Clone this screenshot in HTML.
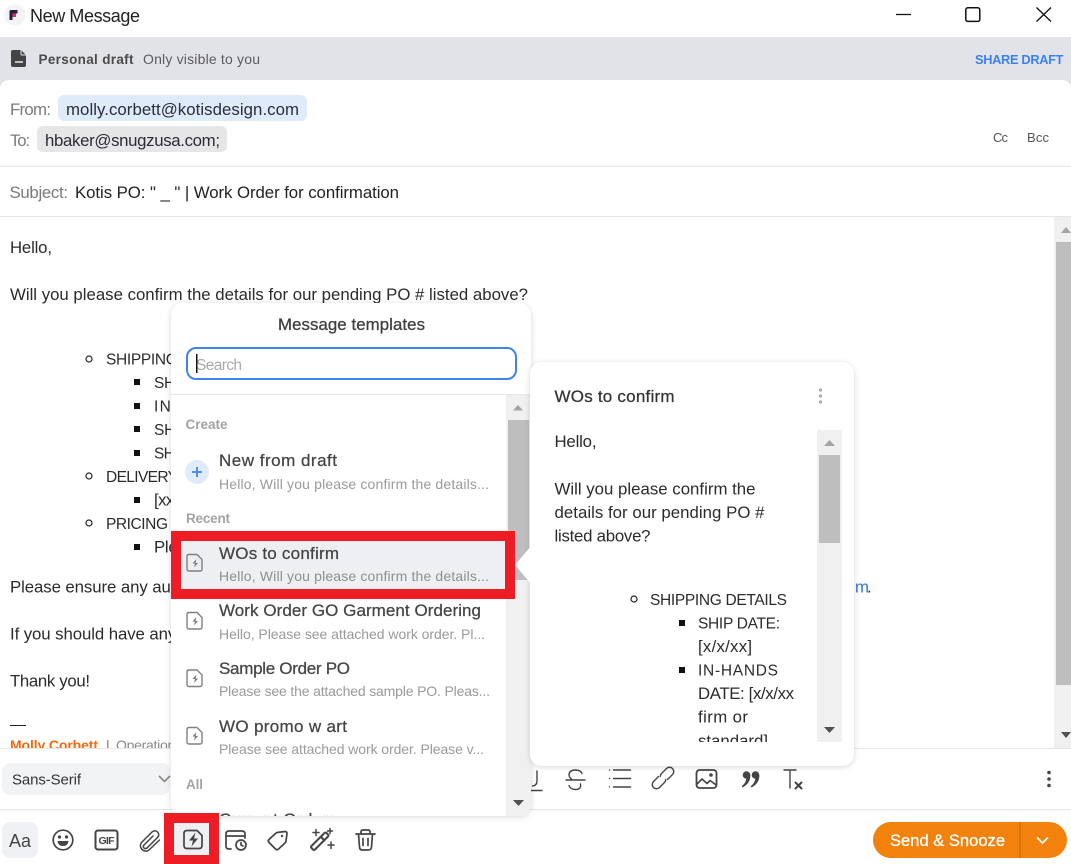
<!DOCTYPE html>
<html><head><meta charset="utf-8"><title>New Message</title>
<style>
html,body{margin:0;padding:0;background:#fff;width:1071px;height:864px;overflow:hidden}
svg{display:block}
text{font-family:"Liberation Sans",Arial,sans-serif;font-size:16.8px;fill:#2b2b2b;white-space:pre}
.u{font-size:15.5px}
.m{stroke:#3f3f3f;stroke-width:.3px}
.h{font-size:13.5px;fill:#a3a3a3;font-weight:bold}
.t{font-size:17px;fill:#444;stroke:#444;stroke-width:.25px}
.s{font-size:14px;fill:#9a9a9a}
.i{fill:none;stroke:#444;stroke-width:1.7;stroke-linecap:round;stroke-linejoin:round}
.ti{fill:none;stroke:#808080;stroke-width:1.4;stroke-linejoin:round}
</style></head><body>
<svg width="1071" height="864" viewBox="0 0 1071 864" xmlns="http://www.w3.org/2000/svg">
<defs>
<filter id="sh" x="-10%" y="-10%" width="120%" height="120%"><feDropShadow dx="0" dy="1" stdDeviation="3" flood-color="#000" flood-opacity=".16"/></filter>
<clipPath id="sigc"><rect x="0" y="217" width="1054" height="531"/></clipPath>
<clipPath id="popc"><rect x="171" y="303" width="360" height="513" rx="12"/></clipPath>
<clipPath id="prevc"><rect x="530" y="430" width="287" height="312"/></clipPath>
</defs>

<!-- title bar -->
<rect width="1071" height="37" fill="#fff"/>
<circle cx="15" cy="15" r="10.5" fill="#f3f3f6"/>
<path d="M9.500 20V11.500q0-1.500 1.500-1.500H17.500v3.500H12.500V20z" fill="#1f2440"/>
<rect x="12.500" y="13.500" width="3.500" height="3.500" fill="#ee2a5c"/>
<text x="30" y="22" textLength="110" style="font-size:18px;fill:#222">New Message</text>
<path d="M896 14.500h15" stroke="#111" stroke-width="1.300"/>
<rect x="965.800" y="7.800" width="14" height="13.600" rx="2" fill="none" stroke="#111" stroke-width="1.500"/>
<path d="M1036.500 7.500l14.500 14M1051 7.500l-14.500 14" stroke="#111" stroke-width="1.300" fill="none"/>

<!-- draft band -->
<rect y="37" width="1071" height="50" fill="#e2e3e8"/>
<path d="M13 50h8l5 5v10q0 2-2 2H13q-2 0-2-2V52q0-2 2-2z" fill="#444"/>
<path d="M21 50v4q0 1 1 1h4" fill="none" stroke="#e2e3e8" stroke-width="1"/>
<path d="M15 62h8" stroke="#e2e3e8" stroke-width="1.600"/>
<text x="38.500" y="64" textLength="95" style="font-size:13.500px;font-weight:bold;fill:#4a4a4a">Personal draft</text>
<text x="143" y="64" textLength="117" style="font-size:14px;fill:#5c5c5c">Only visible to you</text>
<text x="975" y="64" textLength="88.500" style="font-size:12.800px;font-weight:bold;fill:#3b82f0">SHARE DRAFT</text>
<path d="M0 864V90q0-10 10-10H1061q10 0 10 10V864z" fill="#fff"/>

<!-- header -->
<text x="10" y="115" textLength="41" style="fill:#7a7a7a">From:</text>
<rect x="58" y="95" width="249" height="26" rx="6" fill="#deebfb"/>
<text x="66" y="115" textLength="233" style="fill:#2c2c3a">molly.corbett@kotisdesign.com</text>
<text x="10" y="146" textLength="20" style="fill:#7a7a7a">To:</text>
<rect x="37" y="126" width="190" height="26" rx="6" fill="#e6e6e6"/>
<text x="45" y="146" textLength="175" style="fill:#2c2c3a">hbaker@snugzusa.com;</text>
<text x="993" y="142" textLength="15" style="font-size:13px;fill:#555">Cc</text>
<text x="1027" y="142" textLength="22" style="font-size:13px;fill:#555">Bcc</text>
<rect y="166" width="1071" height="1" fill="#e6e6e6"/>
<text x="9.500" y="198" textLength="58.500" style="fill:#7a7a7a">Subject:</text>
<text x="75" y="198" textLength="324" style="fill:#222">Kotis PO: " _ " | Work Order for confirmation</text>
<rect y="216" width="1071" height="1" fill="#e6e6e6"/>

<!-- body -->
<g clip-path="url(#sigc)">
<text x="10" y="253" textLength="42">Hello,</text>
<text x="10" y="300" textLength="518">Will you please confirm the details for our pending PO # listed above?</text>
<circle cx="89" cy="359" r="3" fill="none" stroke="#222" stroke-width="1.200"/>
<text x="106" y="364.500" textLength="137" class="u">SHIPPING DETAILS</text>
<rect x="134" y="379" width="6" height="6" fill="#111"/><text x="154" y="388" textLength="82" class="u">SHIP DATE:</text>
<rect x="134" y="403" width="6" height="6" fill="#111"/><text x="154" y="411.500" textLength="84" class="u">IN-HANDS</text>
<rect x="134" y="426" width="6" height="6" fill="#111"/><text x="154" y="435" textLength="60" class="u">SHIP TO</text>
<rect x="134" y="450" width="6" height="6" fill="#111"/><text x="154" y="458.500" textLength="60" class="u">SHIP VIA</text>
<circle cx="89" cy="476" r="3" fill="none" stroke="#222" stroke-width="1.200"/>
<text x="106" y="482" textLength="72" class="u">DELIVERY</text>
<rect x="134" y="497" width="6" height="6" fill="#111"/><text x="154" y="505.500" textLength="40">[xxxx]</text>
<circle cx="89" cy="523" r="3" fill="none" stroke="#222" stroke-width="1.200"/>
<text x="106" y="529" textLength="62" class="u">PRICING</text>
<rect x="134" y="544" width="6" height="6" fill="#111"/><text x="154" y="552.500" textLength="50">Please</text>
<text x="10" y="592.500" style="letter-spacing:-.08px">Please ensure any auto</text>
<text x="855" y="592.500" style="fill:#2f74e0" textLength="12">m</text><text x="867" y="592.500">.</text>
<text x="10" y="639.500" style="letter-spacing:-.08px">If you should have any</text>
<text x="10" y="686.500" textLength="80">Thank you!</text>
<rect x="10" y="725" width="16" height="1" fill="#222"/>
<text x="10" y="750" textLength="88" style="font-size:14px;font-weight:bold;fill:#f26a10">Molly Corbett</text>
<text x="106" y="750" style="font-size:14px;fill:#777">|</text>
<text x="116" y="750" textLength="66" style="font-size:14px;fill:#888">Operations</text>
</g>
<!-- main scrollbar -->
<rect x="1054" y="217" width="17" height="531" fill="#f0f0f0"/>
<rect x="1056" y="242" width="15" height="443" fill="#bebebe"/>
<path d="M1061 233l5-6 5 6z" fill="#a3a3a3"/>
<path d="M1061 732h10l-5 6z" fill="#505050"/>

<!-- format toolbar -->
<rect y="748" width="1071" height="1" fill="#e6e6e6"/>
<rect x="2" y="763" width="168" height="32" rx="8" fill="#f2f3f5"/>
<text x="12" y="784.500" textLength="69" style="font-size:15px;fill:#333">Sans-Serif</text>
<path d="M159 776l5.500 5.500 5.500-5.500" fill="none" stroke="#888" stroke-width="1.600"/>
<rect y="809" width="1071" height="1" fill="#e6e6e6"/>

<g class="i" style="stroke-width:1.400">
<path d="M537 771v10q0 4.500-4.500 5M528 790.500h14"/>
<path d="M566 780h19M582 773.500q-1.500-3.500-6.500-3.500-6 0-6.500 4.500 0 3 3 5M580.500 784q1 5.500-5 5.500-5 0-6.500-4"/>
<path d="M609.500 770h0M609.500 778.500h0M609.500 787h0M613.500 770h17M613.500 778.500h17M613.500 787h17"/>
<path d="M658.500 776.500L653.500 781.500A4.240 4.240 0 0 0 659.500 787.500L664.500 782.500A4.240 4.240 0 0 0 665.700 779.500M667.500 779.500L672.500 774.500A4.240 4.240 0 0 0 666.500 768.500L661.500 773.500A4.240 4.240 0 0 0 660.300 776.500"/>
<rect x="696.500" y="770" width="20" height="18" rx="3" stroke-width="1.800"/>
<path d="M697 784l5-5 5 4.500 3-3 5.500 4" stroke-width="1.600"/>
<path d="M784 770h12M790 770v18"/>
<path d="M795.500 782.500l6 6M801.500 782.500l-6 6" stroke-width="2"/>
</g>
<circle cx="711" cy="775" r="1.800" fill="#444"/>
<circle cx="746.500" cy="775" r="3.800" fill="#444"/><path d="M750.300 775q.5 8-7.800 12.500l-.8-1.300q4-3 4.500-7.200z" fill="#444"/>
<circle cx="755.500" cy="775" r="3.800" fill="#444"/><path d="M759.300 775q.5 8-7.800 12.500l-.8-1.300q4-3 4.500-7.200z" fill="#444"/>
<circle cx="1049" cy="772.500" r="1.800" fill="#444"/><circle cx="1049" cy="779" r="1.800" fill="#444"/><circle cx="1049" cy="785.500" r="1.800" fill="#444"/>

<!-- bottom toolbar -->
<rect x="2" y="822" width="36" height="36" rx="8" fill="#f0f1f4"/>
<text x="9" y="847" textLength="22" style="font-size:18px;fill:#444">Aa</text>
<g class="i">
<circle cx="63" cy="840" r="9.800"/>
<circle cx="59.500" cy="837" r=".8" fill="#444"/><circle cx="66.500" cy="837" r=".8" fill="#444"/>
</g>
<path d="M57.500 841h11q-.5 5-5.500 5t-5.500-5z" fill="#444"/>
<rect x="95.500" y="830.500" width="22" height="19" rx="2.500" class="i" style="stroke-width:2"/>
<text x="98.500" y="844" textLength="16" style="font-size:10.500px;font-weight:bold;fill:#444">GIF</text>
<path class="i" d="M159.500 840L149 850q-3.500 2.500-7-.5-3-3.500-.5-7L152 832q3-2.500 5.500 0t0 5.500L147 848q-1.500 1.200-3 0t0-3L153 836" style="stroke-width:1.500"/>
<g class="i">
<path d="M229 831h13q3 0 3 3v4M231 849h-2q-3 0-3-3v-12q0-3 3-3M226 836h19"/>
<circle cx="241" cy="845" r="5"/><path d="M241 842.500v2.500l2 1"/>
<path d="M277 832.500L285 831.500q2 0 2 2L286 841q0 1-1 2L278.500 849q-1.500 1.500-3 0L269 842.500q-1.500-1.500 0-3L275.500 833.500q1-1 1.500-1z"/>
<path d="M313 849.500l-1.500-1.500q-1-1 0-2l13-13q1-1 2 0l1.500 1.500q1 1 0 2l-13 13q-1 1-2 0zM321 837l3.500 3.500" stroke-width="2"/>
<path d="M316 829.500v6M313 832.500h6M330 828.500v5M327.500 831h5M331 842v6.500M328 845h6" style="stroke-width:1.500"/>
<path d="M356 834h19M361 834v-2q0-2 2-2h5q2 0 2 2v2M358.500 834l1 13q.2 3 3 3h6q2.800 0 3-3l1-13M363 838.500v7M368 838.500v7"/>
</g>
<circle cx="282" cy="836" r="1.200" fill="#444"/>

<!-- send button -->
<path d="M891 822H1049a18 18 0 0 1 0 36H891a18 18 0 0 1 0-36z" fill="#f2820c"/>
<rect x="1019" y="822" width="2" height="36" fill="#dd7408"/>
<text x="890" y="846" textLength="115" style="font-size:16.500px;fill:#fff;stroke:#fff;stroke-width:.3px">Send &amp; Snooze</text>
<path d="M1037 837.500l5.500 5.500 5.500-5.500" fill="none" stroke="#fff" stroke-width="1.800"/>

<!-- template popup -->
<rect x="171" y="303" width="360" height="513" rx="12" fill="#fff" filter="url(#sh)"/>
<g clip-path="url(#popc)">
<text x="278" y="330" textLength="147" class="m" style="fill:#3f3f3f">Message templates</text>
<rect x="187" y="348" width="329" height="31" rx="9" fill="#fff" stroke="#3f83f0" stroke-width="2"/>
<text x="196" y="370" textLength="46" style="fill:#aaa;font-size:15.500px">Search</text>
<rect x="196" y="354" width="1.500" height="19" fill="#111"/>
<rect x="171" y="394" width="360" height="1" fill="#e6e6e6"/>
<rect x="506" y="395" width="25" height="421" fill="#f0f0f0"/>
<rect x="508" y="420" width="21" height="160" fill="#bebebe"/>
<path d="M513 410.500l5-5.500 5 5.500z" fill="#a3a3a3"/>
<path d="M513 800h11l-5.500 6z" fill="#505050"/>

<text x="185.500" y="429" textLength="42" class="h">Create</text>
<circle cx="197" cy="472" r="12" fill="#e0ecfc"/>
<path d="M192 472h10M197 467v10" stroke="#3b82f0" stroke-width="1.800"/>
<text x="219" y="466" textLength="118" class="t">New from draft</text>
<text x="219" y="489" textLength="270" class="s">Hello, Will you please confirm the details...</text>
<text x="186" y="523" textLength="44" class="h">Recent</text>

<text x="219" y="616" textLength="262" class="t">Work Order GO Garment Ordering</text>
<text x="219" y="639" textLength="266" class="s">Hello, Please see attached work order. Pl...</text>
<text x="219" y="674" textLength="131" class="t">Sample Order PO</text>
<text x="219" y="696" textLength="271" class="s">Please see the attached sample PO. Pleas...</text>
<text x="219" y="732" textLength="128" class="t">WO promo w art</text>
<text x="219" y="754" textLength="265" class="s">Please see attached work order. Please v...</text>
<text x="186" y="789" textLength="17" class="h">All</text>
<text x="219" y="825" textLength="118" class="t">Current Orders</text>

<path class="ti" d="M189 612.500h8l5 5v9.500q0 2-2 2h-11q-2 0-2-2v-12.500q0-2 2-2z"/>
<path d="M196.500 617l-4 4.500h2.500l-1 4 4-4.500h-2.500z" fill="#777"/>
<path class="ti" d="M189 670h8l5 5v9.500q0 2-2 2h-11q-2 0-2-2v-12.500q0-2 2-2z"/>
<path d="M196.500 674.500l-4 4.500h2.500l-1 4 4-4.500h-2.500z" fill="#777"/>
<path class="ti" d="M189 727.500h8l5 5v9.500q0 2-2 2h-11q-2 0-2-2v-12.500q0-2 2-2z"/>
<path d="M196.500 732l-4 4.500h2.500l-1 4 4-4.500h-2.500z" fill="#777"/>
</g>

<!-- preview popup -->
<rect x="530" y="362" width="324" height="404" rx="12" fill="#fff" filter="url(#sh)"/>
<path d="M531 546L515 565L531 584z" fill="#fff"/>
<text x="554.500" y="402" textLength="120" class="t" style="fill:#333;stroke:#333">WOs to confirm</text>
<circle cx="820.500" cy="390" r="1.600" fill="#aaa"/><circle cx="820.500" cy="396" r="1.600" fill="#aaa"/><circle cx="820.500" cy="402" r="1.600" fill="#aaa"/>
<g clip-path="url(#prevc)">
<text x="554.500" y="447" textLength="42">Hello,</text>
<text x="554.500" y="494.500" textLength="201">Will you please confirm the</text>
<text x="554.500" y="518" textLength="210">details for our pending PO #</text>
<text x="554.500" y="541.500" textLength="96">listed above?</text>
<circle cx="634" cy="599" r="3" fill="none" stroke="#222" stroke-width="1.200"/>
<text x="650" y="605" textLength="137" class="u">SHIPPING DETAILS</text>
<rect x="679" y="620" width="6" height="6" fill="#111"/>
<text x="698" y="628.500" textLength="82" class="u">SHIP DATE:</text>
<text x="698" y="652" textLength="54">[x/x/xx]</text>
<rect x="679" y="667" width="6" height="6" fill="#111"/>
<text x="698" y="675.500" textLength="80" class="u">IN-HANDS</text>
<text x="698" y="699" textLength="96">DATE: [x/x/xx</text>
<text x="698" y="722.500" textLength="50">firm or</text>
<text x="698" y="746.500" textLength="70">standard]</text>
</g>
<rect x="817" y="430" width="25" height="312" fill="#f0f0f0"/>
<rect x="819" y="455" width="21" height="88" fill="#bebebe"/>
<path d="M824 446l5.500-6 5.500 6z" fill="#a3a3a3"/>
<path d="M824 727h11l-5.500 6z" fill="#505050"/>

<!-- red annotation boxes -->
<rect x="181" y="541" width="324" height="48" fill="#eeeff3"/>
<text x="219" y="559" textLength="120" class="t">WOs to confirm</text>
<text x="219" y="581" textLength="270" class="s" style="fill:#8f8f8f">Hello, Will you please confirm the details...</text>
<path class="ti" d="M189 554.500h8l5 5v9.500q0 2-2 2h-11q-2 0-2-2v-12.500q0-2 2-2z"/>
<path d="M196.500 559l-4 4.500h2.500l-1 4 4-4.500h-2.500z" fill="#777"/>
<path fill-rule="evenodd" d="M171 531H515V599H171zM181 541V589H505V541z" fill="#ee1c25"/>

<rect x="174" y="823" width="35" height="32" fill="#eff0f3"/>
<path d="M187 830.500h10l5 5v10q0 3-3 3h-12q-3 0-3-3v-12q0-3 3-3z" fill="none" stroke="#444" stroke-width="1.700" stroke-linejoin="round"/>
<path d="M195.500 832.500l-6.500 8h4l-1.500 6 6.500-8h-4z" fill="#444"/>
<path fill-rule="evenodd" d="M164 813H219V864H164zM174 823V855H209V823z" fill="#ee1c25"/>
</svg>
</body></html>
